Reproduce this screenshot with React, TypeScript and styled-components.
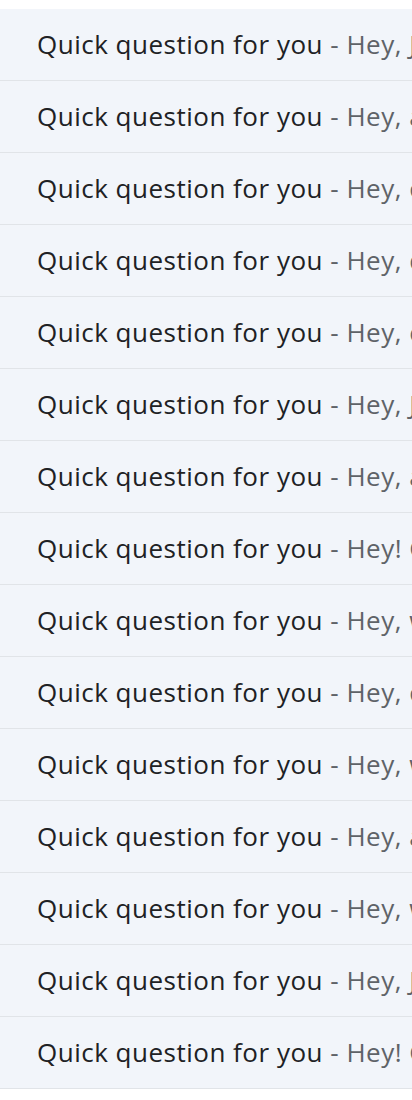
import styled, { createGlobalStyle } from "styled-components";

const rows = [
  "Hey, Just wanted to check in",
  "Hey, are you free this week?",
  "Hey, can we talk tomorrow?",
  "Hey, did you get my note?",
  "Hey, one more thing",
  "Hey, Just a quick follow up",
  "Hey, any update on this?",
  "Hey! Got a minute?",
  "Hey, what do you think?",
  "Hey, could you help me out?",
  "Hey, was wondering about this",
  "Hey, are you around?",
  "Hey, when works for you?",
  "Hey, Just one more question",
  "Hey! Got a sec?",
];

const App = () => {
  return (
    <Page>
      <Global />
      <List>
        {rows.map((snippet, i) => (
          <Row key={i}>
            <Subject>Quick question for you</Subject>
            <Snippet> - {snippet}</Snippet>
          </Row>
        ))}
      </List>
    </Page>
  );
};

export default App;

const Global = createGlobalStyle`
  body {
    margin: 0;
    background: #ffffff;
    font-family: "Open Sans", Roboto, Arial, sans-serif;
  }
`;

const Page = styled.div`
  width: 412px;
  padding-top: 9px;
  overflow: hidden;
`;

const List = styled.div`
  display: flex;
  flex-direction: column;
`;

const Row = styled.div`
  height: 72px;
  box-sizing: border-box;
  display: flex;
  align-items: center;
  padding: 0 0 2px 37px;
  background: #f2f5fa;
  border-bottom: 1px solid #e1e4e8;
  white-space: nowrap;
  overflow: hidden;
  font-size: 26px;
  letter-spacing: 0.5px;
`;

const Subject = styled.span`
  color: #202124;
`;

const Snippet = styled.span`
  color: #5f6368;
  white-space: pre;
`;
